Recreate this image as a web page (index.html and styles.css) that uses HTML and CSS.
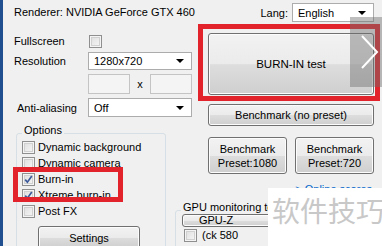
FILE: index.html
```html
<!DOCTYPE html>
<html lang="en">
<head>
    <meta charset="UTF-8">
    <meta name="viewport" content="width=device-width, initial-scale=1.0">
    <title>FurMark</title>
    <link rel="stylesheet" href="styles.css">
</head>
<body>
    <div class="window">
        <div class="left">
            <div class="renderer">Renderer: NVIDIA GeForce GTX 460</div>
            <div class="form">
                <span class="label">Fullscreen</span>
                <span class="cell"><span class="check"></span></span>
                <span class="label">Resolution</span>
                <span class="select">1280x720<span class="arrow"></span></span>
                <span></span>
                <span class="size">
                    <span class="field"></span>
                    <span class="times">x</span>
                    <span class="field"></span>
                </span>
                <span class="label aa">Anti-aliasing</span>
                <span class="select">Off<span class="arrow"></span></span>
            </div>
            <fieldset class="group options">
                <legend>Options</legend>
                <div class="opt"><span class="check"></span>Dynamic background</div>
                <div class="opt"><span class="check"></span>Dynamic camera</div>
                <div class="opt"><span class="check on"><svg width="13" height="13" viewBox="0 0 13 13"><path d="M3.2 6.6 L5.4 9.2 L9.8 3" fill="none" stroke="#3c5a9a" stroke-width="1.7"/></svg></span>Burn-in</div>
                <div class="opt"><span class="check on"><svg width="13" height="13" viewBox="0 0 13 13"><path d="M3.2 6.6 L5.4 9.2 L9.8 3" fill="none" stroke="#3c5a9a" stroke-width="1.7"/></svg></span>Xtreme burn-in</div>
                <div class="opt"><span class="check"></span>Post FX</div>
                <button class="btn settings">Settings</button>
            </fieldset>
        </div>
        <div class="right">
            <div class="lang">
                <span>Lang:</span>
                <span class="select lang-select">English<span class="arrow"></span></span>
            </div>
            <button class="btn burn">BURN-IN test</button>
            <button class="btn bench">Benchmark (no preset)</button>
            <div class="presets">
                <button class="btn preset">Benchmark<br>Preset:1080</button>
                <button class="btn preset">Benchmark<br>Preset:720</button>
            </div>
            <div class="online">&gt; Online scores</div>
            <fieldset class="group gpu">
                <legend>GPU monitoring tools</legend>
                <button class="btn gpuz">GPU-Z</button>
                <div class="opt"><span class="check"></span>(ck 580</div>
            </fieldset>
        </div>

        <div class="mark mark-burn"></div>
        <div class="mark mark-opts"></div>
        <div class="next">
            <svg width="32" height="70" viewBox="0 0 32 70"><path d="M12 19 L27 35 L12 51" fill="none" stroke="#fff" stroke-width="2"/></svg>
        </div>
        <div class="watermark">软件技巧</div>
    </div>
</body>
</html>
```

FILE: styles.css
```css
/* dialog look */
body {
    margin: 0;
    padding: 0;
    font-family: "Liberation Sans", Arial, sans-serif;
    font-size: 11px;
    color: #000;
    background-color: #f0f0f0;
}
.window {
    position: relative;
    display: flex;
    width: 379px;
    height: 246px;
    overflow: hidden;
    border-left: 3px solid #1f4f8f;
    background-color: #f0f0f0;
}
.left {
    width: 161px;
    flex: none;
    padding-left: 11px;
}
.renderer {
    margin-top: 5px;
    line-height: 14px;
    white-space: nowrap;
}
.form {
    display: grid;
    grid-template-columns: 74px 104px;
    grid-template-rows: 14px 18px 20px 19px;
    row-gap: 4px;
    margin-top: 15px;
    align-items: center;
}
.label {
    line-height: 14px;
}
.label.aa {
    margin-left: 3px;
}
.cell {
    display: flex;
    margin-left: 1px;
}
.check {
    display: inline-block;
    flex: none;
    box-sizing: border-box;
    width: 13px;
    height: 13px;
    border: 1px solid #8f8f8f;
    background: linear-gradient(135deg, #dcdcdc, #f8f8f8);
    box-shadow: inset 0 0 0 1px #f4f4f4, inset 0 0 0 2px #d0d0d0;
    vertical-align: middle;
    position: relative;
}
.check svg {
    position: absolute;
    left: -1px;
    top: -1px;
}
.select {
    position: relative;
    display: flex;
    align-items: center;
    box-sizing: border-box;
    height: 100%;
    padding-left: 5px;
    border: 1px solid #acacac;
    background-color: #fff;
}
.arrow {
    position: absolute;
    right: 7px;
    top: 50%;
    margin-top: -2px;
    width: 0;
    height: 0;
    border-left: 4px solid transparent;
    border-right: 4px solid transparent;
    border-top: 4px solid #000;
}
.size {
    display: flex;
    align-items: center;
    height: 100%;
}
.field {
    box-sizing: border-box;
    width: 42px;
    height: 100%;
    border: 1px solid #c4c4c4;
    background-color: #f4f4f4;
}
.times {
    width: 21px;
    text-align: center;
}
.group {
    margin: 0;
    border: 1px solid #d5dfe5;
    border-radius: 3px;
}
.group legend {
    padding: 0 2px 6px;
    line-height: 12px;
    margin-left: 0;
}
.options {
    width: 150px;
    box-sizing: border-box;
    margin: 7px 0 0 2px;
    padding: 0 0 12px 5px;
    height: 140px;
}
.opt {
    display: flex;
    align-items: center;
    gap: 3px;
    height: 16px;
    white-space: nowrap;
}
.options .opt:first-of-type {
    margin-top: -3px;
}
.btn {
    display: block;
    box-sizing: border-box;
    padding: 0;
    font-family: inherit;
    font-size: 11px;
    color: #000;
    border: 1px solid #707070;
    border-radius: 3px;
    background: linear-gradient(#f2f2f2 0%, #ebebeb 50%, #dddddd 51%, #cfcfcf 100%);
    box-shadow: inset 0 0 0 1px #fcfcfc;
}
.settings {
    width: 102px;
    height: 23px;
    margin: 7px 0 0 16px;
}
.right {
    flex: 1;
    min-width: 0;
}
.lang {
    display: flex;
    justify-content: flex-end;
    align-items: center;
    gap: 4px;
    height: 19px;
    margin-top: 3px;
    padding-right: 8px;
}
.lang-select {
    flex: 0 0 82px;
    width: 82px;
}
.burn {
    width: 166px;
    height: 62px;
    margin: 11px 0 0 33px;
    font-size: 11.5px;
}
.bench {
    width: 166px;
    height: 22px;
    margin: 9px 0 0 33px;
}
.presets {
    display: flex;
    gap: 8px;
    margin: 11px 0 0 33px;
}
.preset {
    width: 79px;
    height: 37px;
    line-height: 14px;
}
.online {
    margin-top: 8px;
    padding-right: 10px;
    text-align: right;
    color: #0066cc;
    line-height: 14px;
    white-space: nowrap;
}
.gpu {
    width: 200px;
    box-sizing: border-box;
    margin: 5px 0 0 0;
    padding: 0 0 0 6px;
    height: 60px;
}
.gpu legend {
    white-space: nowrap;
    margin-left: -1px;
}
.gpuz {
    width: 120px;
    height: 13px;
    margin-top: -5px;
    padding-right: 52px;
    line-height: 11px;
}
.gpu .opt {
    margin-top: 0;
    margin-left: 2px;
    gap: 5px;
}

/* annotations drawn over the dialog */
.mark {
    position: absolute;
    box-sizing: border-box;
    border: 5px solid #e3232b;
}
.mark-burn {
    left: 195px;
    top: 24px;
    width: 182px;
    height: 77px;
}
.mark-opts {
    left: 10px;
    top: 167px;
    width: 110px;
    height: 35px;
}
.next {
    position: absolute;
    left: 347px;
    top: 17px;
    width: 32px;
    height: 70px;
    background-color: rgba(110, 110, 110, 0.45);
}
.next svg {
    display: block;
}
.watermark {
    position: absolute;
    left: 265px;
    top: 188px;
    right: 0;
    bottom: 0;
    padding-left: 4px;
    background-color: #fff;
    color: #c8c8c8;
    font-family: "Noto Sans CJK SC", sans-serif;
    font-size: 28px;
    line-height: 44px;
    white-space: nowrap;
}
```
